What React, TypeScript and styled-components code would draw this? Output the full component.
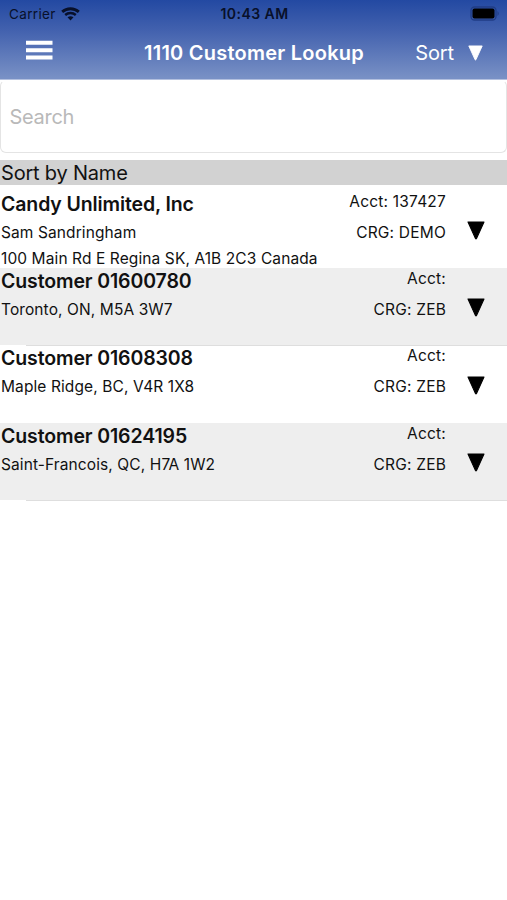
import React from "react";
import styled, { createGlobalStyle } from "styled-components";

const GlobalStyle = createGlobalStyle`
  *, *::before, *::after { box-sizing: border-box; }
  body {
    margin: 0;
    background: #fff;
    color: #111;
    font-family: Inter, "Liberation Sans", sans-serif;
    overflow: hidden;
  }
`;

const Screen = styled.main`
  display: flex;
  flex-direction: column;
  width: 100%;
  height: 900px;
  background: #fff;
`;

const TopArea = styled.header`
  height: 80px;
  background: linear-gradient(#2349a2 0%, #4261ae 38%, #7890c5 98%);
  border-bottom: 1px solid #b3c0df;
`;

const StatusBar = styled.div`
  display: grid;
  grid-template-columns: 1fr auto 1fr;
  align-items: center;
  height: 27px;
  padding: 0 7px 0 9px;
  color: #08102a;
  font-size: 13.5px;
`;

const Carrier = styled.div`
  display: flex;
  align-items: center;
  gap: 5px;
  letter-spacing: 0.35px;
`;

const Clock = styled.div`
  font-weight: 600;
  font-size: 14px;
  letter-spacing: 0.45px;
`;

const BatterySlot = styled.div`
  display: flex;
  justify-content: flex-end;
`;

const NavBar = styled.nav`
  display: grid;
  grid-template-columns: 118px 1fr 119px;
  align-items: center;
  height: 52px;
  padding: 0 25px 0 26px;
  color: #fff;
`;

const MenuButton = styled.button`
  display: flex;
  padding: 0;
  border: 0;
  background: none;
  margin-top: -6px;
`;

const Title = styled.h1`
  margin: 0;
  font-size: 20px;
  font-weight: 600;
  white-space: nowrap;
  letter-spacing: 0.24px;
`;

const SortButton = styled.button`
  display: flex;
  align-items: center;
  justify-content: flex-end;
  gap: 14px;
  padding: 0;
  border: 0;
  background: none;
  color: #fff;
  font: 400 20px Inter, sans-serif;
  letter-spacing: -0.1px;
`;

const SearchField = styled.input`
  height: 73px;
  width: 100%;
  padding: 0 8.5px;
  border: 1px solid #e4e4e4;
  border-top-color: #fff;
  border-radius: 6px;
  outline: 0;
  background: #fff;
  font: 400 20px Inter, sans-serif;
  letter-spacing: -0.3px;
  &::placeholder { color: #b9b9b9; opacity: 1; }
`;

const SectionHeader = styled.h2`
  margin: 7px 0 5.6px;
  height: 25px;
  padding-left: 1px;
  background: #d2d2d2;
  font-size: 20px;
  font-weight: 400;
  line-height: 26px;
  letter-spacing: -0.2px;
`;

const List = styled.ul`
  margin: 0;
  padding: 0;
  list-style: none;
`;

const Row = styled.li<{ $shaded: boolean }>`
  display: grid;
  grid-template-columns: 1fr auto 61px;
  height: 77.4px;
  padding-left: 1px;
  background: ${(p) => (p.$shaded ? "#eeeeee" : "transparent")};
  box-shadow: ${(p) => (p.$shaded ? "26px 1px #dedede" : "none")};
`;

const Details = styled.div`
  display: grid;
  grid-template-rows: 26px 32px 21px;
  align-items: center;
  white-space: nowrap;
`;

const Name = styled.div`
  font-size: 19.5px;
  font-weight: 600;
  line-height: 24px;
  letter-spacing: -0.12px;
`;

const Line = styled.div`
  font-size: 15.5px;
  line-height: 20px;
  letter-spacing: 0.1px;
`;

const Account = styled.div`
  display: grid;
  grid-template-rows: 22px 40px;
  align-items: center;
  text-align: right;
  white-space: nowrap;
`;

const AccountLine = styled(Line)`
  letter-spacing: 0.2px;
`;

const ArrowSlot = styled.button`
  display: flex;
  align-items: flex-start;
  justify-content: center;
  padding: 30.4px 1px 0 0;
  border: 0;
  background: none;
`;

const WifiIcon = () => (
  <svg width="19" height="14" viewBox="0 0 19 14" fill="none" stroke="#08102a">
    <path d="M1.2 4.9 C5.8.7 13.2.7 17.8 4.9" strokeWidth="2.8" />
    <path d="M4.2 8 C7.2 5.3 11.8 5.3 14.8 8" strokeWidth="2.4" />
    <path d="M9.5 13.4 L6.5 10.3 Q9.5 8 12.5 10.3Z" fill="#08102a" stroke="none" />
  </svg>
);

const BatteryIcon = () => (
  <svg width="30" height="15" viewBox="0 0 30 15">
    <rect x="1" y="1" width="25" height="13" rx="3.5" fill="none" stroke="#203d85" strokeWidth="1.3" />
    <rect x="2.5" y="2.6" width="22" height="9.8" rx="2" fill="#000" />
    <path d="M27.5 5 Q30 7.5 27.5 10Z" fill="#203d85" />
  </svg>
);

const MenuIcon = () => (
  <svg width="27" height="20" viewBox="0 0 27 20" fill="#fff">
    <path d="M0 .8h26.5v4H0zM0 8.2h26.5v4H0zM0 15.6h26.5v4H0z" />
  </svg>
);

const Triangle = ({ width, height, color }: { width: number; height: number; color: string }) => (
  <svg width={width} height={height} viewBox="0 0 17 18">
    <path d="M.9 1H16.1L9 16.6Q8.5 17.3 8 16.6Z" fill={color} stroke={color} strokeLinejoin="round" />
  </svg>
);

type Customer = { name: string; lines: string[]; account: string; group: string };

const customers: Customer[] = [
  {
    name: "Candy Unlimited, Inc",
    lines: ["Sam Sandringham", "100 Main Rd E Regina SK, A1B 2C3 Canada"],
    account: "137427",
    group: "DEMO",
  },
  { name: "Customer 01600780", lines: ["Toronto, ON, M5A 3W7"], account: "", group: "ZEB" },
  { name: "Customer 01608308", lines: ["Maple Ridge, BC, V4R 1X8"], account: "", group: "ZEB" },
  { name: "Customer 01624195", lines: ["Saint-Francois, QC, H7A 1W2"], account: "", group: "ZEB" },
];

export default function App() {
  return (
    <Screen>
      <GlobalStyle />
      <TopArea>
        <StatusBar>
          <Carrier>
            Carrier
            <WifiIcon />
          </Carrier>
          <Clock>10:43 AM</Clock>
          <BatterySlot>
            <BatteryIcon />
          </BatterySlot>
        </StatusBar>
        <NavBar>
          <MenuButton aria-label="Menu">
            <MenuIcon />
          </MenuButton>
          <Title>1110 Customer Lookup</Title>
          <SortButton>
            Sort
            <Triangle width={15} height={16} color="#fff" />
          </SortButton>
        </NavBar>
      </TopArea>
      <SearchField placeholder="Search" aria-label="Search" />
      <SectionHeader>Sort by Name</SectionHeader>
      <List>
        {customers.map((c, i) => (
          <Row key={c.name} $shaded={i % 2 === 1}>
            <Details>
              <Name>{c.name}</Name>
              {c.lines.map((line) => (
                <Line key={line}>{line}</Line>
              ))}
            </Details>
            <Account>
              <AccountLine>{`Acct: ${c.account}`.trim()}</AccountLine>
              <AccountLine>CRG: {c.group}</AccountLine>
            </Account>
            <ArrowSlot aria-label={`Open ${c.name}`}>
              <Triangle width={18} height={19} color="#000" />
            </ArrowSlot>
          </Row>
        ))}
      </List>
    </Screen>
  );
}
